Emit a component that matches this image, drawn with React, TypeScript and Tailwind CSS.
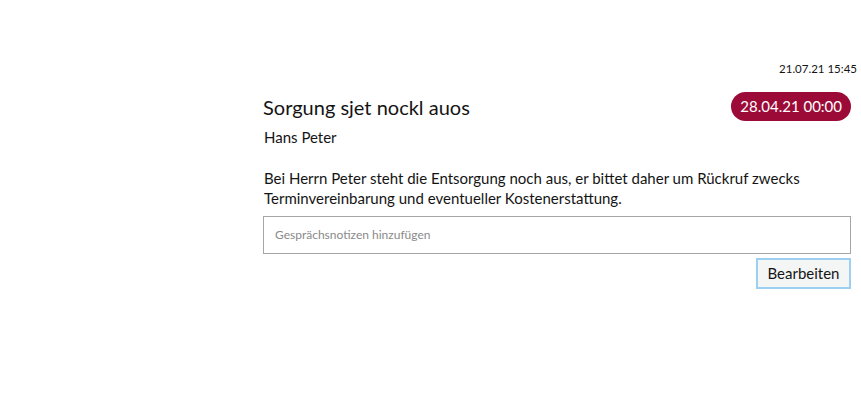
import React from "react";

export default function App() {
  return (
    <div
      className="w-full h-[400px] bg-white text-[#141414] pl-[263px] pr-[10px]"
      style={{ fontFamily: "Lato, 'Noto Sans', sans-serif" }}
    >
      <div className="pt-[61px] text-right text-[11.5px] leading-[16px] -mr-[6px]">21.07.21 15:45</div>
      <div className="mt-[15px] flex items-start justify-between">
        <div className="text-[20px] leading-[28px] mt-[1px]">Sorgung sjet nockl auos</div>
        <div className="h-[29px] px-[9px] rounded-full bg-[#9c0b37] text-white text-[15px] leading-[29px]">
          28.04.21 00:00
        </div>
      </div>
      <div className="text-[15px] leading-[20px] ml-[1px] mt-[6px]">Hans Peter</div>
      <p className="mt-[21px] ml-[1px] text-[15px] leading-[20px]">
        Bei Herrn Peter steht die Entsorgung noch aus, er bittet daher um Rückruf zwecks
        <br />
        Terminvereinbarung und eventueller Kostenerstattung.
      </p>
      <div className="mt-[8px] h-[38px] border border-[#a6a6a6] flex items-center px-[11px] text-[12px] text-[#8a8a8a]">
        Gesprächsnotizen hinzufügen
      </div>
      <div className="mt-[4px] flex justify-end">
        <button className="h-[31px] w-[95px] border-2 border-[#9ccff2] bg-[#f4f6f6] text-[15px] text-[#141414]">
          Bearbeiten
        </button>
      </div>
    </div>
  );
}
